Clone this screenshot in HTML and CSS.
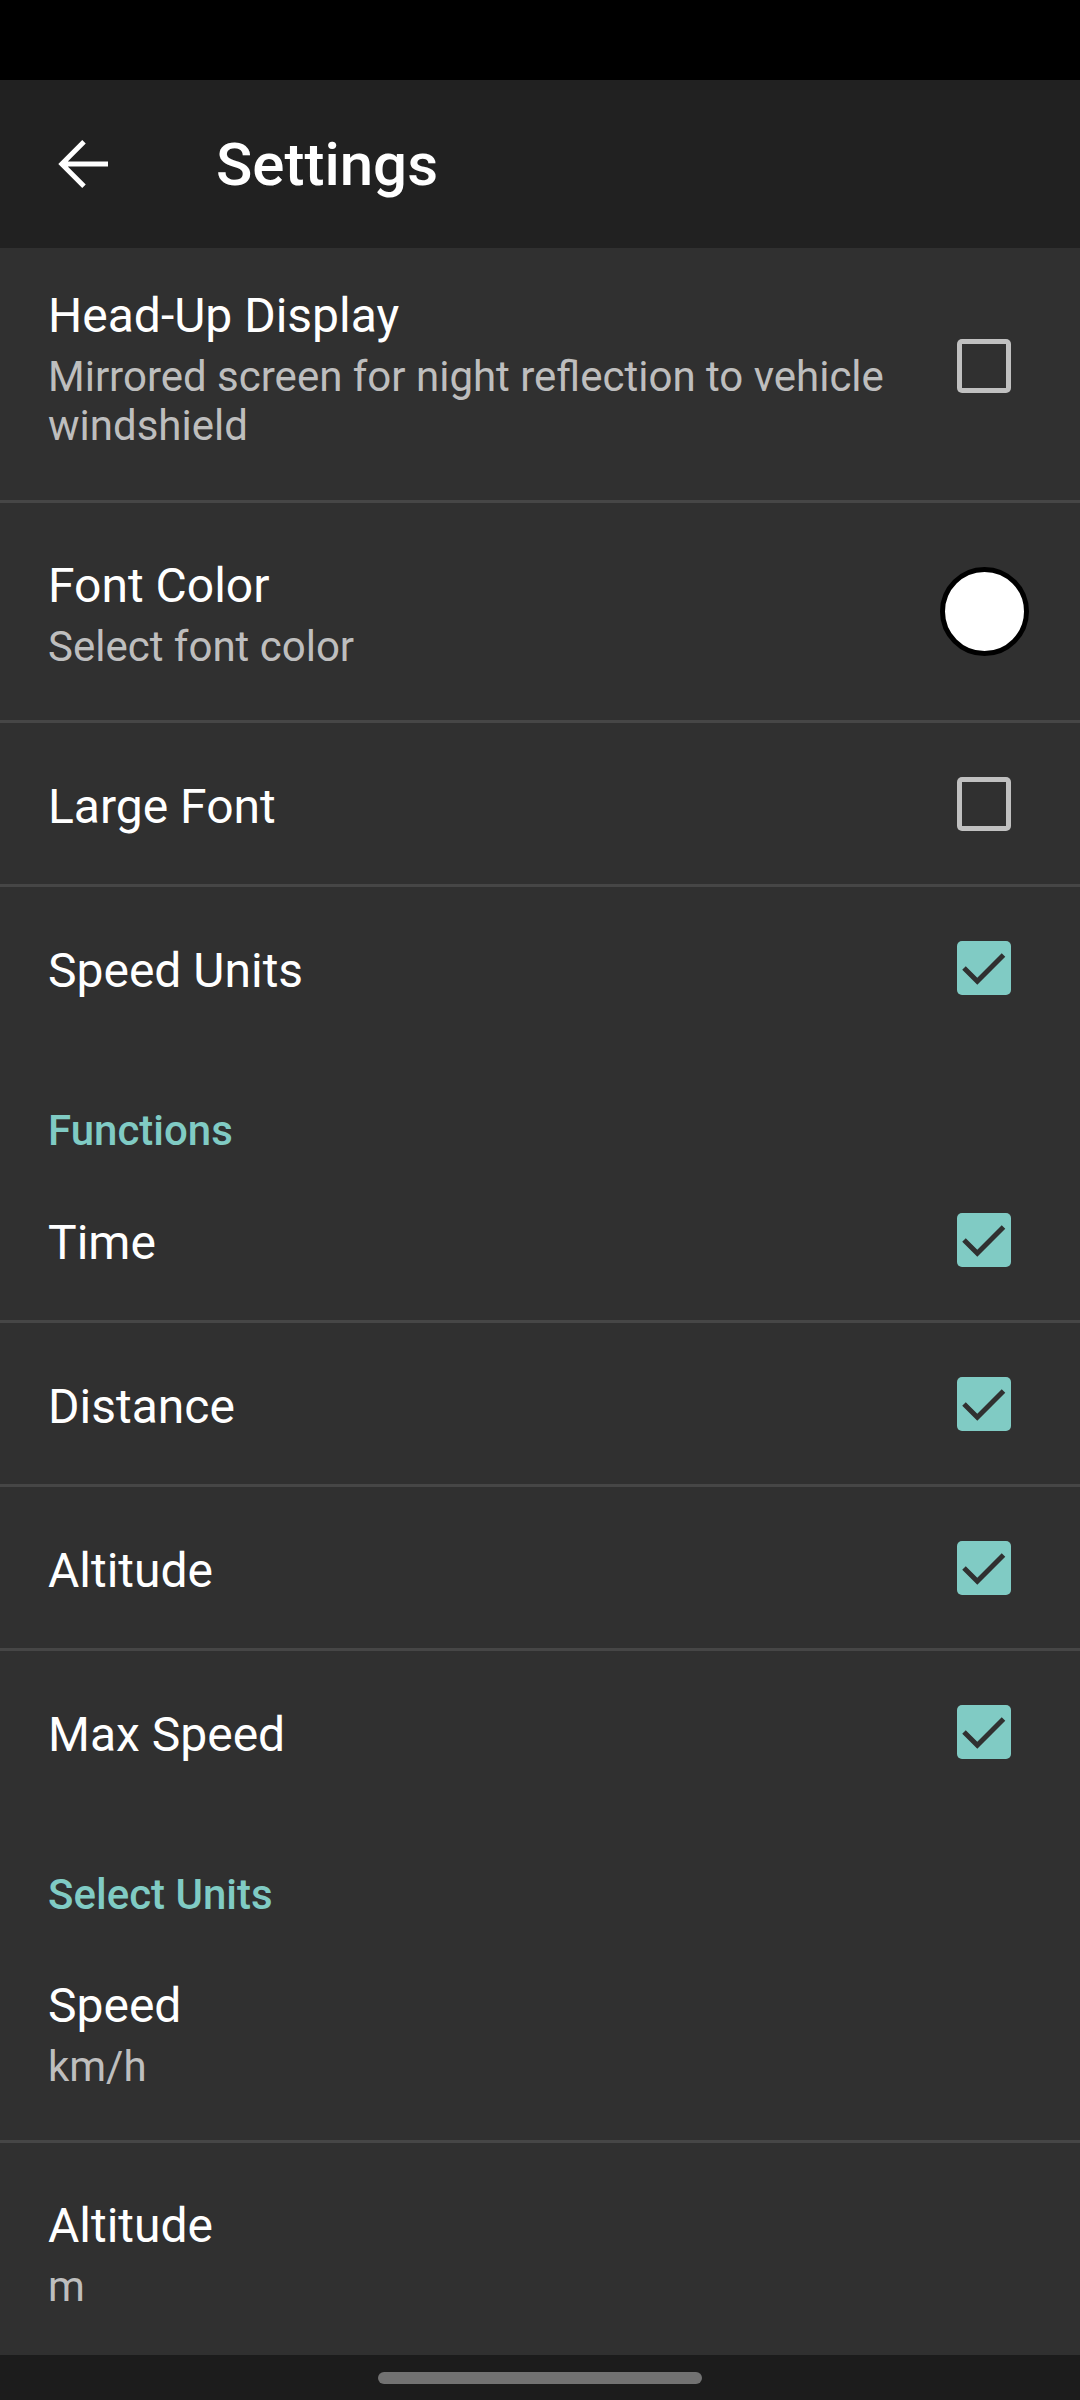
FILE: index.html
```html
<!DOCTYPE html>
<html>
<head>
<meta charset="utf-8">
<title>Settings</title>
<link rel="stylesheet" href="styles.css">
</head>
<body>
<div class="screen">
  <div class="statusbar"></div>

  <header class="toolbar">
    <button class="nav-btn" aria-label="Back">
      <svg viewBox="0 0 24 24" width="72" height="72">
        <path d="M20 12H5.2M12 4.6L4.6 12L12 19.4" />
      </svg>
    </button>
    <h1 class="toolbar-title">Settings</h1>
  </header>

  <main class="prefs">
    <div class="pref">
      <div class="pref-text">
        <div class="pref-title">Head-Up Display</div>
        <div class="pref-summary">Mirrored screen for night reflection to vehicle windshield</div>
      </div>
      <div class="widget"><span class="check"></span></div>
    </div>

    <div class="pref two-line">
      <div class="pref-text">
        <div class="pref-title">Font Color</div>
        <div class="pref-summary">Select font color</div>
      </div>
      <div class="widget"><span class="swatch"></span></div>
    </div>

    <div class="pref single">
      <div class="pref-text">
        <div class="pref-title">Large Font</div>
      </div>
      <div class="widget"><span class="check"></span></div>
    </div>

    <div class="pref single last">
      <div class="pref-text">
        <div class="pref-title">Speed Units</div>
      </div>
      <div class="widget">
        <span class="check on"><svg viewBox="0 0 54 54"><path d="M7 27L20.3 40.2L46.5 14" /></svg></span>
      </div>
    </div>

    <div class="category">Functions</div>

    <div class="pref single">
      <div class="pref-text">
        <div class="pref-title">Time</div>
      </div>
      <div class="widget">
        <span class="check on"><svg viewBox="0 0 54 54"><path d="M7 27L20.3 40.2L46.5 14" /></svg></span>
      </div>
    </div>

    <div class="pref single">
      <div class="pref-text">
        <div class="pref-title">Distance</div>
      </div>
      <div class="widget">
        <span class="check on"><svg viewBox="0 0 54 54"><path d="M7 27L20.3 40.2L46.5 14" /></svg></span>
      </div>
    </div>

    <div class="pref single">
      <div class="pref-text">
        <div class="pref-title">Altitude</div>
      </div>
      <div class="widget">
        <span class="check on"><svg viewBox="0 0 54 54"><path d="M7 27L20.3 40.2L46.5 14" /></svg></span>
      </div>
    </div>

    <div class="pref single last">
      <div class="pref-text">
        <div class="pref-title">Max Speed</div>
      </div>
      <div class="widget">
        <span class="check on"><svg viewBox="0 0 54 54"><path d="M7 27L20.3 40.2L46.5 14" /></svg></span>
      </div>
    </div>

    <div class="category">Select Units</div>

    <div class="pref two-line">
      <div class="pref-text">
        <div class="pref-title">Speed</div>
        <div class="pref-summary">km/h</div>
      </div>
    </div>

    <div class="pref two-line last">
      <div class="pref-text">
        <div class="pref-title">Altitude</div>
        <div class="pref-summary">m</div>
      </div>
    </div>
  </main>

  <div class="navbar"><span class="handle"></span></div>
</div>
</body>
</html>
```

FILE: styles.css
```css
html, body {
  margin: 0;
  padding: 0;
}

body {
  width: 1080px;
  height: 2400px;
  background: #303030;
  font-family: Roboto, "Noto Sans", sans-serif;
  color: #fff;
}

.screen {
  display: flex;
  flex-direction: column;
  height: 2400px;
  overflow: hidden;
}

/* system bars */
.statusbar {
  height: 80px;
  flex: none;
  background: #000;
}

.navbar {
  height: 45px;
  flex: none;
  background: #1c1c1c;
  display: flex;
  justify-content: center;
  align-items: center;
}

.navbar .handle {
  width: 324px;
  height: 12px;
  border-radius: 6px;
  background: #727272;
}

/* app bar */
.toolbar {
  height: 168px;
  flex: none;
  background: #212121;
  display: flex;
  align-items: center;
}

.nav-btn {
  width: 168px;
  height: 168px;
  padding: 0;
  border: 0;
  background: none;
  display: flex;
  align-items: center;
  justify-content: center;
}

.nav-btn svg path {
  fill: none;
  stroke: #fff;
  stroke-width: 1.65;
}

.toolbar-title {
  margin: 2px 0 0 48px;
  font-size: 60px;
  font-weight: 500;
  line-height: 70px;
}

/* preference list */
.prefs {
  flex: 1;
  overflow: hidden;
}

.pref {
  box-sizing: border-box;
  display: flex;
  align-items: center;
  padding: 34px 51px 50px 48px;
  border-bottom: 3px solid #464646;
}

.pref.single {
  min-height: 164px;
  padding-top: 0;
  padding-bottom: 0;
}

.pref.two-line {
  min-height: 220px;
  padding-top: 0;
  padding-bottom: 0;
}

.pref.last {
  border-bottom: 0;
}

.pref.single.last {
  min-height: 161px;
}

.pref.two-line.last {
  min-height: 217px;
}

.pref-text {
  flex: 1;
  min-width: 0;
  padding: 6px 30px 0 0;
}

.pref-title {
  font-size: 48px;
  line-height: 56px;
}

.pref-summary {
  margin-top: 8px;
  font-size: 42px;
  line-height: 49px;
  color: rgba(255, 255, 255, 0.7);
}

.widget {
  width: 90px;
  flex: none;
  display: flex;
  justify-content: center;
}

.check {
  display: block;
  width: 54px;
  height: 54px;
  border-radius: 5px;
  box-shadow: inset 0 0 0 5px #c0c0c0;
}

.check.on {
  background: #80cbc4;
  box-shadow: none;
}

.check svg {
  display: block;
  width: 54px;
  height: 54px;
}

.check svg path {
  fill: none;
  stroke: #303030;
  stroke-width: 5;
}

.swatch {
  display: block;
  box-sizing: border-box;
  width: 89px;
  height: 89px;
  border-radius: 50%;
  background: #fff;
  border: 5px solid #000;
}

.category {
  padding: 58px 48px 4px;
  font-size: 42px;
  font-weight: 500;
  line-height: 49px;
  color: #80cbc4;
}
```
